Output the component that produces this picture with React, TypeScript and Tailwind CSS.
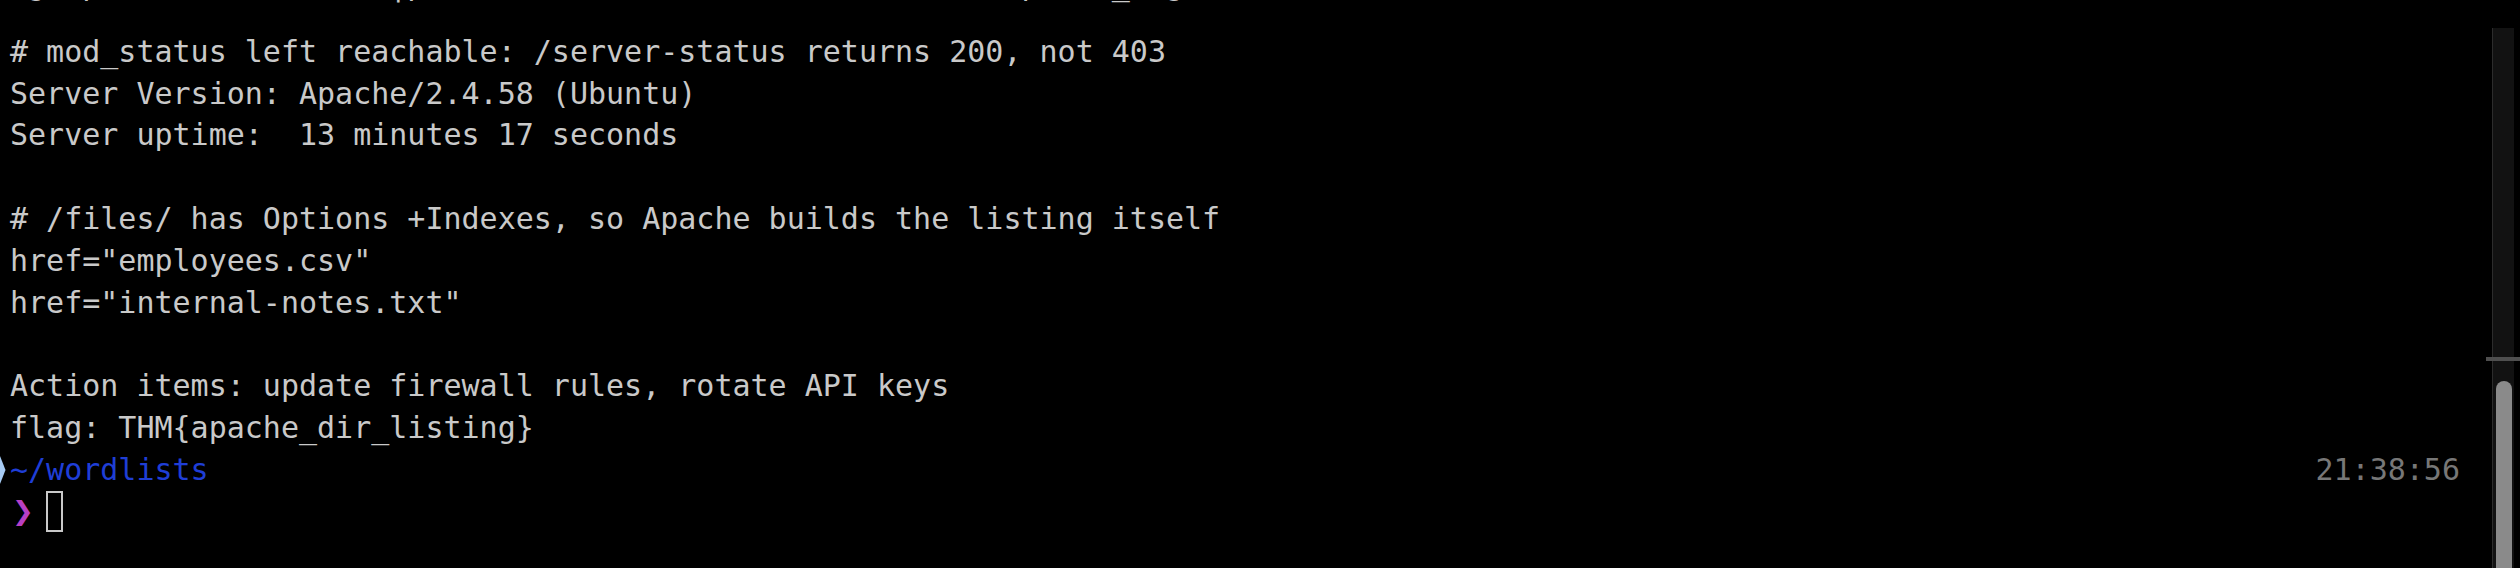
import React from 'react';

const lines: string[] = [
  '# mod_status left reachable: /server-status returns 200, not 403',
  'Server Version: Apache/2.4.58 (Ubuntu)',
  'Server uptime:  13 minutes 17 seconds',
  '',
  '# /files/ has Options +Indexes, so Apache builds the listing itself',
  'href="employees.csv"',
  'href="internal-notes.txt"',
  '',
  'Action items: update firewall rules, rotate API keys',
  'flag: THM{apache_dir_listing}',
];

const Scrollbar: React.FC = () => (
  <div className="relative w-[34px] h-full">
    <div className="absolute left-0 right-0 top-[357px] h-[4px] bg-[#4f4f4f]" />
    <div className="ml-[6px] mt-[28px] w-[22px] h-[540px] bg-[#121212] border-l border-[#2c2c2c] flex flex-col justify-end items-center">
      <div className="w-[16px] h-[187px] rounded-t-full bg-[#8a8a8a]" />
    </div>
  </div>
);

const App: React.FC = () => {
  return (
    <div className="h-[568px] w-[2520px] overflow-hidden bg-black flex font-['DejaVu_Sans_Mono','Liberation_Mono',monospace] text-[30px] leading-[41.8px] text-[#c9c9c9]">
      <div className="flex-1 -mt-[36px] pl-[10px] pr-[26px]">
        {/* tail of the previous output, scrolled out of view except descenders */}
        <div className="whitespace-pre h-[41.8px] mb-[25px]">
          {'egrep (Server Version|plain text/html) -- index.html > apache_log'}
        </div>
        {lines.map((line, i) => (
          <div key={i} className="whitespace-pre h-[41.8px]">
            {line}
          </div>
        ))}
        <div className="flex justify-between h-[41.8px]">
          <div className="flex items-center">
            <span className="-ml-[10px] w-[10px] flex items-center">
              <svg width="6" height="28" viewBox="0 0 6 28">
                <path d="M0 0 L5.5 14 L0 28 Z" fill="#a6cbf4" />
              </svg>
            </span>
            <span className="text-[#1f3ed6]">~/wordlists</span>
          </div>
          <span className="text-[#777777]">21:38:56</span>
        </div>
        <div className="flex items-center h-[41.8px]">
          <span className="w-[36px] pl-[2px] text-[26px] text-[#b83fc4] font-['DejaVu_Sans',sans-serif]">❯</span>
          <span className="w-[17px] h-[41px] border-2 border-[#c9c9c9]" />
        </div>
      </div>
      <Scrollbar />
    </div>
  );
};

export default App;
